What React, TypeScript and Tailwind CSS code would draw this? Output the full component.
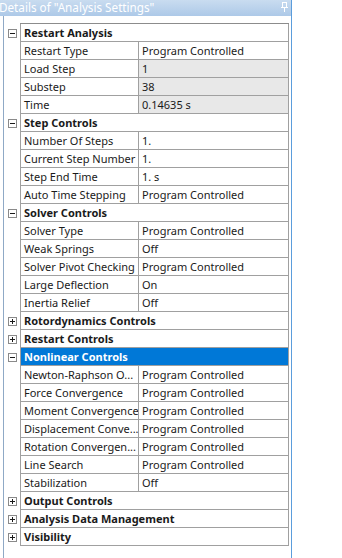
import React from "react";

type Row =
  | { kind: "h"; label: string; open: boolean; sel?: boolean }
  | { kind: "d"; name: string; value: string; gray?: boolean };

const rows: Row[] = [
  { kind: "h", label: "Restart Analysis", open: true },
  { kind: "d", name: "Restart Type", value: "Program Controlled" },
  { kind: "d", name: "Load Step", value: "1", gray: true },
  { kind: "d", name: "Substep", value: "38", gray: true },
  { kind: "d", name: "Time", value: "0.14635 s", gray: true },
  { kind: "h", label: "Step Controls", open: true },
  { kind: "d", name: "Number Of Steps", value: "1." },
  { kind: "d", name: "Current Step Number", value: "1." },
  { kind: "d", name: "Step End Time", value: "1. s" },
  { kind: "d", name: "Auto Time Stepping", value: "Program Controlled" },
  { kind: "h", label: "Solver Controls", open: true },
  { kind: "d", name: "Solver Type", value: "Program Controlled" },
  { kind: "d", name: "Weak Springs", value: "Off" },
  { kind: "d", name: "Solver Pivot Checking", value: "Program Controlled" },
  { kind: "d", name: "Large Deflection", value: "On" },
  { kind: "d", name: "Inertia Relief", value: "Off" },
  { kind: "h", label: "Rotordynamics Controls", open: false },
  { kind: "h", label: "Restart Controls", open: false },
  { kind: "h", label: "Nonlinear Controls", open: true, sel: true },
  { kind: "d", name: "Newton-Raphson O...", value: "Program Controlled" },
  { kind: "d", name: "Force Convergence", value: "Program Controlled" },
  { kind: "d", name: "Moment Convergence", value: "Program Controlled" },
  { kind: "d", name: "Displacement Conve...", value: "Program Controlled" },
  { kind: "d", name: "Rotation Convergen...", value: "Program Controlled" },
  { kind: "d", name: "Line Search", value: "Program Controlled" },
  { kind: "d", name: "Stabilization", value: "Off" },
  { kind: "h", label: "Output Controls", open: false },
  { kind: "h", label: "Analysis Data Management", open: false },
  { kind: "h", label: "Visibility", open: false },
];

function Box({ open }: { open: boolean }) {
  return (
    <svg width="9" height="9" viewBox="0 0 9 9" className="block">
      <rect x="0.5" y="0.5" width="8" height="8" fill="#ffffff" stroke="#8a8a8a" />
      <rect x="2" y="4" width="5" height="1" fill="#1a1a1a" />
      {!open && <rect x="4" y="2" width="1" height="5" fill="#1a1a1a" />}
    </svg>
  );
}

export default function App() {
  return (
    <div
      className="w-[342px] h-[558px] bg-white overflow-hidden text-[11px] text-[#1a1a1a]"
      style={{ fontFamily: '"Noto Sans", "Open Sans", sans-serif' }}
    >
      <div className="w-[292px] h-full flex flex-col border-r border-[#5b9ddc]">
        <div className="h-[16px] shrink-0 flex items-center bg-gradient-to-b from-[#c9dcf0] to-[#adc9e8] relative">
          <span className="text-white text-[11.7px] leading-none whitespace-nowrap -ml-[1px]">
            Details of "Analysis Settings"
          </span>
          <svg width="7" height="10" viewBox="0 0 7 10" className="absolute right-[3px] top-[2px]">
            <rect x="1.5" y="0.5" width="4" height="5" fill="none" stroke="#ffffff" />
            <rect x="0" y="5" width="7" height="1" fill="#ffffff" />
            <rect x="3" y="6" width="1" height="4" fill="#ffffff" />
          </svg>
        </div>
        <div className="flex-1 flex">
          <div className="w-[3px] shrink-0" />
          <div className="w-[1px] shrink-0 bg-[#8fa9c6]" />
          <div className="w-[285px] pt-[7px]">
            <div className="border-t border-[#8c8c8c] ml-[16px] w-[269px]" />
            {rows.map((r, i) =>
              r.kind === "h" ? (
                <div key={i} className="flex h-[18px]">
                  <div className="w-[16px] shrink-0 flex items-center justify-center">
                    <Box open={r.open} />
                  </div>
                  <div
                    className={
                      "w-[269px] border-l border-r border-b border-[#a0a0a0] flex items-center pl-[3px] pt-[1px] font-bold whitespace-nowrap overflow-hidden " +
                      (r.sel ? "bg-[#0078d7] text-white" : "bg-white")
                    }
                  >
                    {r.label}
                  </div>
                </div>
              ) : (
                <div key={i} className="flex h-[18px]">
                  <div className="w-[16px] shrink-0" />
                  <div className="w-[269px] flex border-l border-r border-b border-[#a0a0a0]">
                    <div className="w-[118px] shrink-0 border-r border-[#a0a0a0] flex items-center pl-[3px] pt-[1px] whitespace-nowrap overflow-hidden">
                      {r.name}
                    </div>
                    <div
                      className={
                        "flex-1 flex items-center pl-[3px] pt-[1px] whitespace-nowrap overflow-hidden " +
                        (r.gray ? "bg-[#e8e8e8]" : "bg-white")
                      }
                    >
                      {r.value}
                    </div>
                  </div>
                </div>
              )
            )}
          </div>
        </div>
      </div>
    </div>
  );
}
